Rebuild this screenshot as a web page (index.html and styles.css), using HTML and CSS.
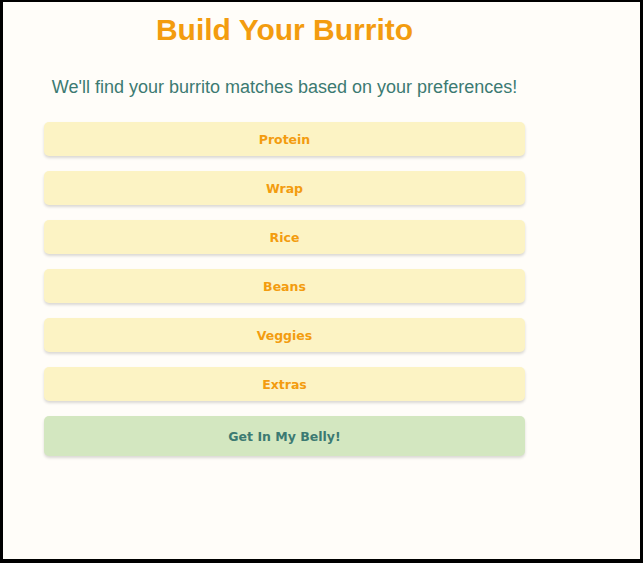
FILE: index.html
```html
<!DOCTYPE html>
<html>
<head>
<meta charset="utf-8">
<link rel="stylesheet" href="styles.css">
</head>
<body>
<div class="frame">
  <div class="content">
    <h1 class="title">Build Your Burrito</h1>
    <p class="subtitle">We'll find your burrito matches based on your preferences!</p>
    <div class="options">
      <button class="opt">Protein</button>
      <button class="opt">Wrap</button>
      <button class="opt">Rice</button>
      <button class="opt">Beans</button>
      <button class="opt">Veggies</button>
      <button class="opt">Extras</button>
      <button class="go">Get In My Belly!</button>
    </div>
  </div>
</div>
</body>
</html>
```
FILE: styles.css
```css
html, body {
  margin: 0;
  padding: 0;
  background: #000;
}
.frame {
  box-sizing: border-box;
  width: 643px;
  height: 563px;
  border-style: solid;
  border-color: #000;
  border-width: 2px 3px 4px 3px;
  background: #fffdf9;
}
.content {
  width: 481px;
  margin-left: 41px;
}
.title {
  margin: 0;
  padding-top: 10px;
  text-align: center;
  font-family: "Liberation Sans", Arial, sans-serif;
  font-weight: bold;
  font-size: 30px;
  line-height: 36px;
  color: #f39c0f;
}
.subtitle {
  margin: 0;
  padding-top: 28px;
  text-align: center;
  font-family: "Liberation Sans", Arial, sans-serif;
  font-size: 18px;
  line-height: 22px;
  color: #3c7a72;
}
.options {
  display: flex;
  flex-direction: column;
  gap: 15px;
  margin-top: 24px;
}
.opt, .go {
  display: block;
  width: 100%;
  border: none;
  border-radius: 5px;
  box-shadow: 0 2px 3px rgba(0, 0, 0, 0.15);
  font-family: "DejaVu Sans", Verdana, sans-serif;
  font-weight: bold;
  font-size: 12.5px;
  cursor: pointer;
}
.opt {
  height: 34px;
  background: #fcf3c4;
  color: #f39c0f;
}
.go {
  height: 40px;
  background: #d3e7c0;
  color: #3c7a72;
}
```
